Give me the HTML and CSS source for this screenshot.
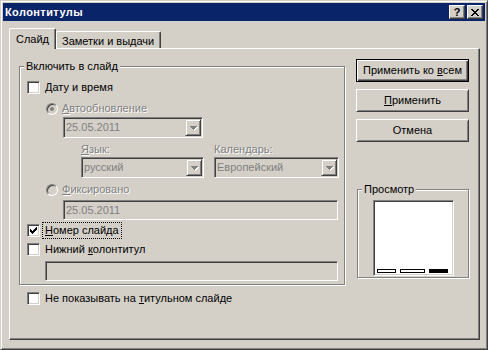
FILE: index.html
```html
<!DOCTYPE html>
<html lang="ru">
<head>
    <meta charset="UTF-8">
    <title>Колонтитулы</title>
    <link rel="stylesheet" href="styles.css">
</head>
<body>

    <div class="window">
        <!-- Заголовок окна -->
        <div class="titlebar">
            <span class="title">Колонтитулы</span>
            <span class="cap-btn help">?</span>
            <span class="cap-btn close">
                <svg width="8" height="7" viewBox="0 0 8 7" shape-rendering="crispEdges"><path d="M0 0h2v1H0zM6 0h2v1H6zM1 1h2v1H1zM5 1h2v1H5zM2 2h4v1H2zM3 3h2v1H3zM2 4h4v1H2zM1 5h2v1H1zM5 5h2v1H5zM0 6h2v1H0zM6 6h2v1H6z" fill="#000"/></svg>
            </span>
        </div>

        <div class="client">
            <div class="tabs">
                <div class="tab active">Слайд</div>
                <div class="tab">Заметки и выдачи</div>
            </div>

            <div class="panel">
                <div class="panel-row">
                    <!-- Группа "Включить в слайд" -->
                    <div class="group main-group">
                        <div class="group-title">Включить в слайд</div>

                        <div class="row check-row first-row">
                            <span class="checkbox"></span>
                            <span class="label"><u>Д</u>ату и время</span>
                        </div>

                        <div class="row radio-row auto-row">
                            <span class="radio"><span class="dot"></span></span>
                            <span class="label disabled"><u>А</u>втообновление</span>
                        </div>

                        <div class="combo date-combo">
                            <span class="combo-text">25.05.2011</span>
                            <span class="combo-btn">
                                <svg width="8" height="5" viewBox="0 0 8 5" shape-rendering="crispEdges"><path d="M1 1h7v1H1zM2 2h5v1H2zM3 3h3v1H3zM4 4h1v1H4z" fill="#fff"/><path d="M0 0h7v1H0zM1 1h5v1H1zM2 2h3v1H2zM3 3h1v1H3z" fill="#808080"/></svg>
                            </span>
                        </div>

                        <div class="sub-row">
                            <div class="sub-col lang-col">
                                <div class="small-label disabled"><u>Я</u>зык:</div>
                                <div class="combo">
                                    <span class="combo-text">русский</span>
                                    <span class="combo-btn">
                                        <svg width="8" height="5" viewBox="0 0 8 5" shape-rendering="crispEdges"><path d="M1 1h7v1H1zM2 2h5v1H2zM3 3h3v1H3zM4 4h1v1H4z" fill="#fff"/><path d="M0 0h7v1H0zM1 1h5v1H1zM2 2h3v1H2zM3 3h1v1H3z" fill="#808080"/></svg>
                                    </span>
                                </div>
                            </div>
                            <div class="sub-col cal-col">
                                <div class="small-label disabled">Кален<u>д</u>арь:</div>
                                <div class="combo">
                                    <span class="combo-text">Европейский</span>
                                    <span class="combo-btn">
                                        <svg width="8" height="5" viewBox="0 0 8 5" shape-rendering="crispEdges"><path d="M1 1h7v1H1zM2 2h5v1H2zM3 3h3v1H3zM4 4h1v1H4z" fill="#fff"/><path d="M0 0h7v1H0zM1 1h5v1H1zM2 2h3v1H2zM3 3h1v1H3z" fill="#808080"/></svg>
                                    </span>
                                </div>
                            </div>
                        </div>

                        <div class="row radio-row fixed-row">
                            <span class="radio"></span>
                            <span class="label disabled"><u>Ф</u>иксировано</span>
                        </div>

                        <div class="field fixed-field">25.05.2011</div>

                        <div class="row check-row number-row">
                            <span class="checkbox">
                                <svg width="7" height="7" viewBox="0 0 7 7" shape-rendering="crispEdges"><path d="M0 2h1v3H0zM1 3h1v3H1zM2 4h1v3H2zM3 3h1v3H3zM4 2h1v3H4zM5 1h1v3H5zM6 0h1v3H6z" fill="#000"/></svg>
                            </span>
                            <span class="label focused"><u>Н</u>омер слайда</span>
                        </div>

                        <div class="row check-row footer-row">
                            <span class="checkbox"></span>
                            <span class="label">Нижний <u>к</u>олонтитул</span>
                        </div>

                        <div class="field footer-field"></div>
                    </div>

                    <!-- Кнопки и просмотр -->
                    <div class="side">
                        <div class="button default"><span>Применить ко <u>в</u>сем</span></div>
                        <div class="button"><span><u>П</u>рименить</span></div>
                        <div class="button"><span>Отмена</span></div>

                        <div class="group preview-group">
                            <div class="group-title">Просмотр</div>
                            <div class="preview">
                                <span class="bar bar-short"></span>
                                <span class="bar bar-long"></span>
                                <span class="bar bar-short filled"></span>
                            </div>
                        </div>
                    </div>
                </div>

                <div class="row check-row title-slide-row">
                    <span class="checkbox"></span>
                    <span class="label">Не показывать на <u>т</u>итульном слайде</span>
                </div>
            </div>
        </div>
    </div>

</body>
</html>
```

FILE: styles.css
```css
* {
    margin: 0;
    padding: 0;
    box-sizing: border-box;
}

body {
    font-family: 'Liberation Sans', Arial, sans-serif;
    font-size: 11px;
    line-height: 13px;
    color: #000;
    background-color: #d4d0c8;
}

u {
    text-decoration: underline;
    text-underline-offset: 1px;
}

/* Окно */
.window {
    width: 488px;
    height: 350px;
    background-color: #d4d0c8;
    border: 1px solid;
    border-color: #d4d0c8 #404040 #404040 #d4d0c8;
    box-shadow: inset 1px 1px #fff, inset -1px -1px #808080;
    padding: 2px;
}

.titlebar {
    height: 18px;
    background-color: #0a246a;
    display: flex;
    align-items: center;
    padding: 0 2px 0 2px;
}

.title {
    flex: 1;
    color: #fff;
    font-weight: bold;
    font-size: 11px;
    letter-spacing: 0.4px;
}

.cap-btn {
    width: 16px;
    height: 14px;
    display: flex;
    align-items: center;
    justify-content: center;
    background-color: #d4d0c8;
    border: 1px solid;
    border-color: #fff #404040 #404040 #fff;
    box-shadow: inset -1px -1px #808080;
    font-weight: bold;
    font-size: 11px;
    line-height: 12px;
}

.cap-btn.help {
    margin-right: 2px;
}

.client {
    padding: 7px 0 0 6px;
}

/* Вкладки */
.tabs {
    display: flex;
    align-items: flex-end;
    height: 20px;
}

.tab {
    height: 17px;
    padding: 3px 0 0 5px;
    width: 105px;
    background-color: #d4d0c8;
    border: 1px solid;
    border-bottom: none;
    border-color: #fff #404040 #404040 #fff;
    border-radius: 2px 2px 0 0;
    box-shadow: inset -1px 0 #808080;
}

.tab.active {
    position: relative;
    z-index: 1;
    width: 47px;
    height: 21px;
    margin-bottom: -1px;
    padding: 4px 0 0 6px;
}

.panel {
    width: 471px;
    height: 292px;
    border: 1px solid;
    border-color: #fff #404040 #404040 #fff;
    box-shadow: inset -1px -1px #808080;
}

.panel-row {
    display: flex;
    padding-left: 9px;
}

/* Группы */
.group {
    border: 1px solid #808080;
    box-shadow: inset 1px 1px #fff, 1px 1px #fff;
}

.group-title {
    width: max-content;
    margin: -7px 0 0 4px;
    padding: 0 2px;
    background-color: #d4d0c8;
}

.main-group {
    width: 326px;
    margin-top: 17px;
    padding-bottom: 3px;
}

.row {
    display: flex;
    align-items: center;
    height: 13px;
}

.label {
    margin-left: 5px;
    white-space: nowrap;
}

.disabled {
    color: #808080;
    text-shadow: 1px 1px #fff;
}

.checkbox {
    width: 13px;
    height: 13px;
    flex: none;
    display: flex;
    align-items: center;
    justify-content: center;
    background-color: #fff;
    border: 1px solid;
    border-color: #808080 #fff #fff #808080;
    box-shadow: inset 1px 1px #404040, inset -1px -1px #d4d0c8;
}

.radio {
    width: 12px;
    height: 12px;
    flex: none;
    display: flex;
    align-items: center;
    justify-content: center;
    border-radius: 50%;
    background-color: #d4d0c8;
    border: 1px solid;
    border-color: #808080 #fff #fff #808080;
    box-shadow: inset 1px 1px #404040, inset -1px -1px #d4d0c8;
}

.radio .dot {
    width: 4px;
    height: 4px;
    border-radius: 50%;
    background-color: #808080;
}

.radio-row .label {
    margin-left: 4px;
}

.first-row {
    margin: 8px 0 0 7px;
}

.auto-row {
    margin: 8px 0 0 26px;
}

.fixed-row {
    margin: 5px 0 0 26px;
}

.number-row {
    margin: 4px 0 0 7px;
}

.footer-row {
    margin: 6px 0 0 7px;
}

.focused {
    margin-left: 4px;
    padding: 0 1px;
    outline: 1px dotted #000;
    outline-offset: 1px;
}

/* Поля */
.combo {
    height: 21px;
    display: flex;
    align-items: center;
    padding: 1px;
    background-color: #d4d0c8;
    border: 1px solid;
    border-color: #808080 #fff #fff #808080;
    box-shadow: inset 1px 1px #404040, inset -1px -1px #d4d0c8;
}

.combo-text {
    flex: 1;
    padding-left: 1px;
    color: #808080;
}

.combo-btn {
    width: 16px;
    height: 17px;
    display: flex;
    align-items: center;
    justify-content: center;
    border: 1px solid;
    border-color: #d4d0c8 #404040 #404040 #d4d0c8;
    box-shadow: inset 1px 1px #fff, inset -1px -1px #808080;
}

.combo-btn svg {
    margin: 1px 0 0 1px;
}

.date-combo {
    width: 140px;
    margin: 2px 0 0 43px;
}

.sub-row {
    display: flex;
    gap: 10px;
    margin: 5px 0 0 61px;
}

.lang-col {
    width: 123px;
}

.cal-col {
    width: 125px;
}

.small-label {
    margin-bottom: 1px;
}

.field {
    height: 20px;
    padding: 3px 0 0 2px;
    color: #808080;
    background-color: #d4d0c8;
    border: 1px solid;
    border-color: #808080 #fff #fff #808080;
    box-shadow: inset 1px 1px #404040, inset -1px -1px #d4d0c8;
}

.fixed-field {
    width: 275px;
    margin: 4px 0 0 43px;
}

.footer-field {
    width: 293px;
    margin: 5px 0 0 25px;
}

/* Правая колонка */
.side {
    width: 113px;
    margin: 10px 0 0 11px;
}

.button {
    height: 23px;
    display: flex;
    align-items: center;
    justify-content: center;
    margin-bottom: 7px;
    white-space: nowrap;
    border: 1px solid;
    border-color: #fff #404040 #404040 #fff;
    box-shadow: inset 1px 1px #d4d0c8, inset -1px -1px #808080;
}

.button.default {
    border-color: #000;
    box-shadow: inset 1px 1px #fff, inset -1px -1px #404040, inset -2px -2px #808080;
}

.preview-group {
    width: 112px;
    height: 89px;
    margin: 47px 0 0 1px;
}

.preview {
    width: 81px;
    height: 76px;
    margin: 4px 0 0 15px;
    display: flex;
    align-items: flex-end;
    gap: 4px;
    padding: 0 0 2px 3px;
    background-color: #fff;
    border: 1px solid;
    border-color: #808080 #fff #fff #808080;
    box-shadow: inset 1px 1px #404040, inset -1px -1px #d4d0c8;
}

.bar {
    height: 4px;
    border: 1px solid #000;
    background-color: #fff;
}

.bar-short {
    width: 19px;
}

.bar-long {
    width: 25px;
}

.bar.filled {
    background-color: #000;
}

.title-slide-row {
    margin: 7px 0 0 17px;
}
```
